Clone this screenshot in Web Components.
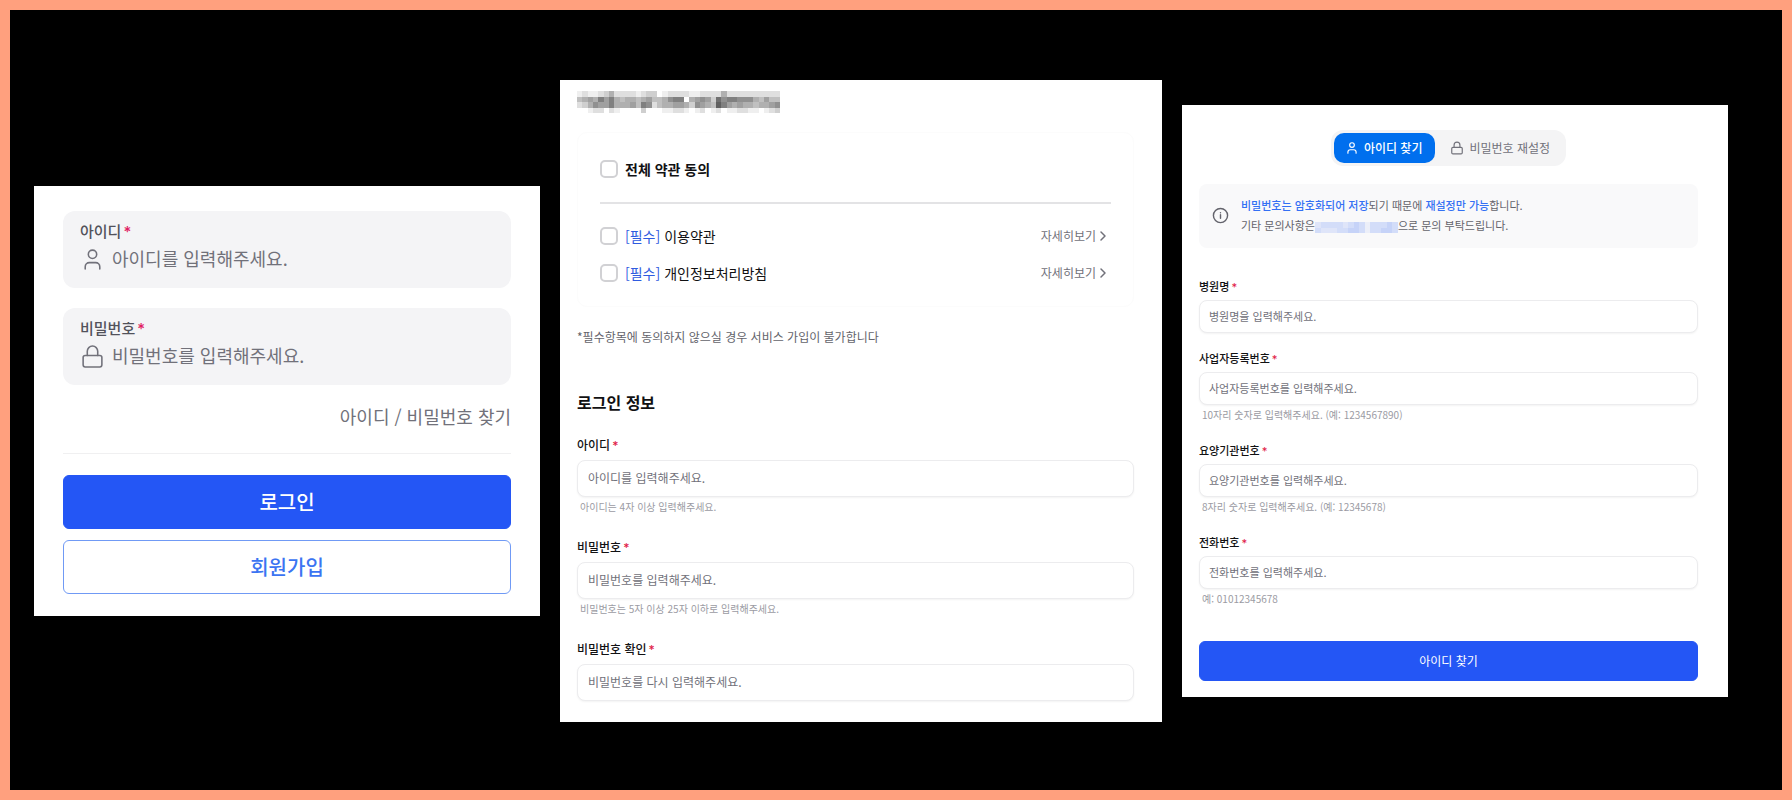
<!DOCTYPE html>
<html lang="ko">
<head>
<meta charset="UTF-8">
<meta name="viewport" content="width=device-width, initial-scale=1">
<title>로그인 · 회원가입 · 아이디 찾기</title>
<style>
    body {
        margin: 0;
        font-family: "Noto Sans CJK KR", "Noto Sans", sans-serif;
        color: #111113;
    }
</style>
</head>
<body>
<auth-stage>
    <login-panel></login-panel>
    <signup-panel></signup-panel>
    <find-panel></find-panel>
</auth-stage>

<script>
const ICONS = {
    user: '<path d="M19 21v-2a4 4 0 0 0-4-4H9a4 4 0 0 0-4 4v2"/><circle cx="12" cy="7" r="4"/>',
    lock: '<rect x="3" y="11" width="18" height="11" rx="2"/><path d="M7 11V7a5 5 0 0 1 10 0v4"/>',
    info: '<circle cx="12" cy="12" r="10"/><path d="M12 16v-5M12 8h.01"/>',
    chevron: '<path d="m4 4 8 8-8 8"/>'
};

class LineIcon extends HTMLElement {
    constructor() {
        super();
        this.attachShadow({ mode: 'open' });
    }
    connectedCallback() {
        const size = this.getAttribute('size') || 24;
        const stroke = this.getAttribute('stroke') || 2;
        this.shadowRoot.innerHTML = `
        <style>
            :host { display: inline-flex; flex: none; }
            svg { display: block; }
        </style>
        <svg width="${size}" height="${size}" viewBox="0 0 24 24" fill="none" stroke="currentColor"
            stroke-width="${stroke}" stroke-linecap="round" stroke-linejoin="round" aria-hidden="true">${ICONS[this.getAttribute('name')]}</svg>
        `;
    }
}
customElements.define('line-icon', LineIcon);

// Masked text: one hex digit per cell, 0 is solid and f is empty
class PixelMask extends HTMLElement {
    constructor() {
        super();
        this.attachShadow({ mode: 'open' });
    }
    connectedCallback() {
        const rows = this.getAttribute('rows').split(' ');
        const cells = rows.map((row, y) => [...row].map((cell, x) =>
            `<rect x="${x}" y="${y}" width="1" height="1" fill-opacity="${(15 - parseInt(cell, 16)) / 15}"/>`
        ).join('')).join('');
        this.shadowRoot.innerHTML = `
        <style>
            :host { display: block; }
            svg { display: block; width: 100%; height: 100%; }
        </style>
        <svg viewBox="0 0 ${rows[0].length} ${rows.length}" preserveAspectRatio="none"
            fill="currentColor" shape-rendering="crispEdges" aria-hidden="true">${cells}</svg>
        `;
    }
}
customElements.define('pixel-mask', PixelMask);

class AuthStage extends HTMLElement {
    constructor() {
        super();
        this.attachShadow({ mode: 'open' });
        this.shadowRoot.innerHTML = `
        <style>
            :host {
                display: grid;
                grid-template-columns: 506fr 602fr 546fr;
                gap: 20px;
                align-items: center;
                box-sizing: border-box;
                min-height: 100vh;
                padding: 22px 54px 20px 24px;
                border: 10px solid #ffa07e;
                background: #000;
            }
        </style>
        <slot></slot>
        `;
    }
}
customElements.define('auth-stage', AuthStage);

// Filled box with the label inside, used on the login form
class LoginField extends HTMLElement {
    constructor() {
        super();
        this.attachShadow({ mode: 'open' });
    }
    connectedCallback() {
        this.shadowRoot.innerHTML = `
        <style>
            :host {
                display: block;
                padding: 10px 17px 16px;
                border-radius: 12px;
                background: #f4f4f6;
            }
            label {
                display: block;
                margin-bottom: 5px;
                font-size: 15px;
                font-weight: 500;
                line-height: 20px;
                color: #52525b;
            }
            label span {
                margin-left: 2px;
                font-family: Inter, sans-serif;
                line-height: 1;
                color: #e11d63;
            }
            .row { display: flex; align-items: center; gap: 7px; color: #71717a; }
            input {
                flex: 1;
                min-width: 0;
                height: 26px;
                padding: 0 0 2px;
                box-sizing: border-box;
                border: 0;
                outline: 0;
                background: none;
                font: inherit;
                font-size: 18px;
                color: #3f3f46;
            }
            input::placeholder { color: #71717a; opacity: 1; }
        </style>
        <label for="field">${this.getAttribute('label')}<span>*</span></label>
        <div class="row">
            <line-icon name="${this.getAttribute('icon')}" size="25" stroke="1.5"></line-icon>
            <input id="field" type="${this.getAttribute('type') || 'text'}" placeholder="${this.getAttribute('placeholder')}" required>
        </div>
        `;
    }
}
customElements.define('login-field', LoginField);

// Outlined field: sizes come from the panel through custom properties
class FormField extends HTMLElement {
    constructor() {
        super();
        this.attachShadow({ mode: 'open' });
    }
    connectedCallback() {
        const hint = this.getAttribute('hint');
        this.shadowRoot.innerHTML = `
        <style>
            :host { display: block; font-size: var(--field-font, 12px); }
            label {
                display: block;
                margin-bottom: 6px;
                font-weight: 500;
                line-height: var(--field-label-height, 18px);
            }
            label span {
                margin-left: 2px;
                font-family: Inter, sans-serif;
                line-height: 1;
                color: #e11d48;
            }
            input {
                display: block;
                box-sizing: border-box;
                width: 100%;
                height: var(--field-height, 37px);
                padding: 0 var(--field-padding, 10px) 2px;
                border: 1px solid #ececee;
                border-radius: 8px;
                outline: 0;
                background: #fff;
                box-shadow: 0 1px 2px rgba(0, 0, 0, .05);
                font: inherit;
                color: #3f3f46;
            }
            input::placeholder { color: #71717a; opacity: 1; }
            p {
                margin: 0;
                padding-left: 3px;
                font-size: 10px;
                line-height: 20px;
                color: #9b9ba3;
            }
        </style>
        <label for="field">${this.getAttribute('label')}<span>*</span></label>
        <input id="field" type="${this.getAttribute('type') || 'text'}" placeholder="${this.getAttribute('placeholder')}" required>
        ${hint ? `<p>${hint}</p>` : ''}
        `;
    }
}
customElements.define('form-field', FormField);

class ActionButton extends HTMLElement {
    constructor() {
        super();
        this.attachShadow({ mode: 'open' });
        this.shadowRoot.innerHTML = `
        <style>
            :host { display: block; }
            button {
                display: block;
                width: 100%;
                height: var(--button-height, 54px);
                padding: 0 0 2px;
                border: 1px solid #2456f5;
                border-radius: 6px;
                background: #2456f5;
                font: inherit;
                font-size: var(--button-font, 20px);
                font-weight: var(--button-weight, 500);
                color: #fff;
                cursor: pointer;
            }
            :host([outline]) button { border-color: #709af5; background: #fff; color: #3b74f2; }
        </style>
        <button type="button"><slot></slot></button>
        `;
    }
}
customElements.define('action-button', ActionButton);

class LoginPanel extends HTMLElement {
    constructor() {
        super();
        this.attachShadow({ mode: 'open' });
        this.shadowRoot.innerHTML = `
        <style>
            :host { display: block; padding: 25px 29px 22px; background: #fff; }
            form { display: flex; flex-direction: column; }
            login-field { margin-bottom: 20px; }
            a {
                align-self: flex-end;
                font-size: 18px;
                line-height: 22px;
                color: #71717a;
                text-decoration: none;
            }
            hr { width: 100%; margin: 26px 0 21px; border: 0; border-top: 1px solid #f0f0f1; }
            .actions { display: grid; gap: 11px; }
        </style>
        <form>
            <login-field label="아이디" icon="user" placeholder="아이디를 입력해주세요."></login-field>
            <login-field label="비밀번호" icon="lock" type="password" placeholder="비밀번호를 입력해주세요."></login-field>
            <a href="#find">아이디 / 비밀번호 찾기</a>
            <hr>
            <div class="actions">
                <action-button>로그인</action-button>
                <action-button outline>회원가입</action-button>
            </div>
        </form>
        `;
    }
}
customElements.define('login-panel', LoginPanel);

class AgreeRow extends HTMLElement {
    constructor() {
        super();
        this.attachShadow({ mode: 'open' });
        this.shadowRoot.innerHTML = `
        <style>
            :host { display: flex; align-items: center; height: 20px; font-size: 14px; }
            input {
                appearance: none;
                box-sizing: border-box;
                width: 18px;
                height: 18px;
                margin: 0 7px 0 0;
                border: 2px solid #d1d1d4;
                border-radius: 5px;
                background: #fff;
            }
            input:checked { border-color: #2456f5; background: #2456f5; }
            label { flex: 1; line-height: 20px; }
            :host([all]) label { font-weight: 700; }
            em { font-style: normal; color: #2f5be0; }
            a {
                display: flex;
                align-items: center;
                gap: 3px;
                font-size: 12px;
                line-height: 20px;
                color: #71717a;
                text-decoration: none;
            }
        </style>
        <input id="agree" type="checkbox">
        <label for="agree"><em hidden>[필수] </em><slot></slot></label>
        <a href="#terms" hidden>자세히보기<line-icon name="chevron" size="12" stroke="3"></line-icon></a>
        `;
    }
    connectedCallback() {
        if (this.hasAttribute('all')) {
            this.shadowRoot.querySelector('a').remove();
            this.shadowRoot.querySelector('em').remove();
            return;
        }
        this.shadowRoot.querySelectorAll('[hidden]').forEach((el) => el.removeAttribute('hidden'));
    }
}
customElements.define('agree-row', AgreeRow);

class SignupPanel extends HTMLElement {
    constructor() {
        super();
        this.attachShadow({ mode: 'open' });
        this.shadowRoot.innerHTML = `
        <style>
            :host { display: block; padding: 11px 28px 21px 17px; background: #fff; }
            pixel-mask { width: 203px; height: 22px; color: #111; }
            .terms {
                margin-top: 19px;
                padding: 26px 22px 23px;
                border: 1px solid #fcfcfc;
                border-radius: 10px;
            }
            hr { margin: 23px 0 22px; border: 0; border-top: 2px solid #e3e3e5; }
            agree-row + agree-row { margin-top: 17px; }
            .note { margin: 21px 0 45px; font-size: 12px; line-height: 18px; color: #63636b; }
            h2 { margin: 0 0 23px; font-size: 16px; font-weight: 700; line-height: 22px; }
            form { display: grid; gap: 21px; }
        </style>
        <pixel-mask rows="edeedcaddddedccfeddddeeddddadddddddddd ba9a797abaaba9bba877fa989c6877888ab9bb9 dca8997aaa9b78dbaa99ac89ab579a9aabaa98 ffeddfdeffffcfffeeddefedfedfeeddeefedc"></pixel-mask>
        <div class="terms">
            <agree-row all>전체 약관 동의</agree-row>
            <hr>
            <agree-row>이용약관</agree-row>
            <agree-row>개인정보처리방침</agree-row>
        </div>
        <p class="note">*필수항목에 동의하지 않으실 경우 서비스 가입이 불가합니다</p>
        <h2>로그인 정보</h2>
        <form>
            <form-field label="아이디" placeholder="아이디를 입력해주세요." hint="아이디는 4자 이상 입력해주세요."></form-field>
            <form-field label="비밀번호" type="password" placeholder="비밀번호를 입력해주세요." hint="비밀번호는 5자 이상 25자 이하로 입력해주세요."></form-field>
            <form-field label="비밀번호 확인" type="password" placeholder="비밀번호를 다시 입력해주세요."></form-field>
        </form>
        `;
    }
}
customElements.define('signup-panel', SignupPanel);

class TabSwitch extends HTMLElement {
    constructor() {
        super();
        this.attachShadow({ mode: 'open' });
        this.shadowRoot.innerHTML = `
        <style>
            :host {
                display: flex;
                gap: 4px;
                padding: 3px;
                border-radius: 12px;
                background: #f4f4f5;
            }
            button {
                display: flex;
                align-items: center;
                gap: 5px;
                height: 30px;
                padding: 0 13px 1px 11px;
                border: 0;
                border-radius: 10px;
                background: none;
                font: inherit;
                font-size: 12px;
                color: #71717a;
                cursor: pointer;
            }
            button[aria-selected="true"] { background: #006fee; color: #fff; font-weight: 500; }
        </style>
        <button type="button" role="tab" aria-selected="true"><line-icon name="user" size="14"></line-icon>아이디 찾기</button>
        <button type="button" role="tab" aria-selected="false"><line-icon name="lock" size="14"></line-icon>비밀번호 재설정</button>
        `;
        this.tabs = this.shadowRoot.querySelectorAll('button');
        this.tabs.forEach((tab) => tab.addEventListener('click', () => this.select(tab)));
    }
    select(active) {
        this.tabs.forEach((tab) => tab.setAttribute('aria-selected', tab === active));
    }
}
customElements.define('tab-switch', TabSwitch);

class InfoNotice extends HTMLElement {
    constructor() {
        super();
        this.attachShadow({ mode: 'open' });
        this.shadowRoot.innerHTML = `
        <style>
            :host {
                display: flex;
                align-items: center;
                gap: 12px;
                padding: 11px 13px 13px;
                border-radius: 8px;
                background: #f9f9fa;
                font-size: 11px;
                line-height: 20px;
                color: #63636b;
            }
        </style>
        <line-icon name="info" size="17"></line-icon>
        <div><slot></slot></div>
        `;
    }
}
customElements.define('info-notice', InfoNotice);

class FindPanel extends HTMLElement {
    constructor() {
        super();
        this.attachShadow({ mode: 'open' });
        this.shadowRoot.innerHTML = `
        <style>
            :host {
                display: block;
                padding: 25px 30px 16px 17px;
                background: #fff;
                --field-font: 11px;
                --field-label-height: 16px;
                --field-height: 33px;
                --field-padding: 9px;
                --button-height: 40px;
                --button-font: 12px;
                --button-weight: 400;
            }
            .tabs { display: flex; justify-content: center; }
            info-notice { margin: 18px 0 30px; }
            b { font-weight: 500; color: #3370f4; }
            pixel-mask { display: inline-block; width: 83px; height: 11px; vertical-align: -3px; color: #3b6cf5; }
            form { display: grid; gap: 17px; }
            action-button { margin-top: 15px; }
        </style>
        <div class="tabs"><tab-switch></tab-switch></div>
        <info-notice><b>비밀번호는 암호화되어 저장</b>되기 때문에 <b>재설정만 가능</b>합니다.<br>기타 문의사항은<pixel-mask rows="dccccdcbcecccbc cdddccbbceccbbc"></pixel-mask>으로 문의 부탁드립니다.</info-notice>
        <form>
            <form-field label="병원명" placeholder="병원명을 입력해주세요."></form-field>
            <form-field label="사업자등록번호" placeholder="사업자등록번호를 입력해주세요." hint="10자리 숫자로 입력해주세요. (예: 1234567890)"></form-field>
            <form-field label="요양기관번호" placeholder="요양기관번호를 입력해주세요." hint="8자리 숫자로 입력해주세요. (예: 12345678)"></form-field>
            <form-field label="전화번호" type="tel" placeholder="전화번호를 입력해주세요." hint="예: 01012345678"></form-field>
            <action-button>아이디 찾기</action-button>
        </form>
        `;
    }
}
customElements.define('find-panel', FindPanel);
</script>
</body>
</html>
